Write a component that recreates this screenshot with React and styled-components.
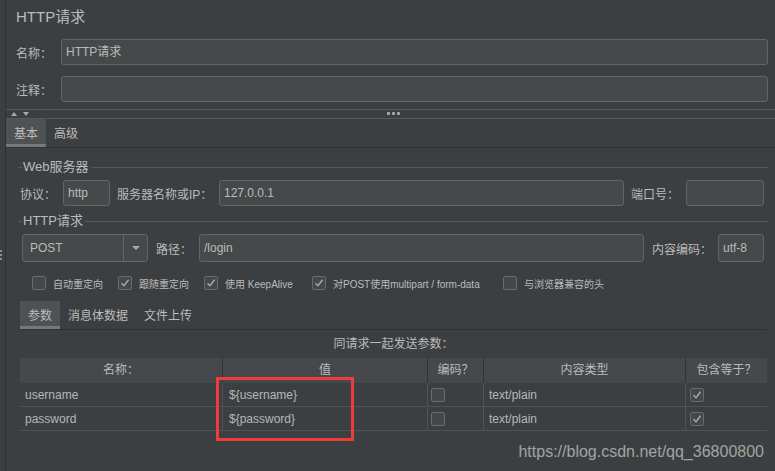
import React from 'react';
import styled, { createGlobalStyle } from 'styled-components';

const Global = createGlobalStyle`
  html, body { margin: 0; padding: 0; background: #3c3f41; }
  body { font-family: "Liberation Sans", "Noto Sans CJK SC", sans-serif; }
  * { box-sizing: border-box; }
`;

const FONT = `"Liberation Sans", "Noto Sans CJK SC", sans-serif`;

const Frame = styled.div`
  position: relative;
  width: 775px;
  height: 471px;
  overflow: hidden;
  display: flex;
  background: #3c3f41;
  color: #bbbbbb;
  font-family: ${FONT};
  font-size: 12px;
`;

const Gutter = styled.div`
  position: relative;
  flex: none;
  width: 6px;
  border-right: 1px solid #2f3133;
`;

const Grip = styled.div`
  position: absolute;
  left: 0;
  top: 250px;
  display: flex;
  flex-direction: column;
  gap: 2px;
  & > span { width: 2px; height: 2px; background: #8d8f91; }
`;

const Main = styled.div`
  flex: 1;
  min-width: 0;
  display: flex;
  flex-direction: column;
`;

const Header = styled.div`
  padding: 0 7px 0 10px;
`;

const Title = styled.div`
  height: 33px;
  line-height: 34px;
  font-size: 15px;
  color: #bbbbbb;
`;

const FieldRow = styled.div`
  display: flex;
  align-items: center;
  margin-top: ${p => p.$mt}px;
`;

const Label = styled.div`
  flex: none;
  width: ${p => p.$w}px;
  padding-left: ${p => p.$pl || 0}px;
  font-size: ${p => p.$fs || 12}px;
  color: #bbbbbb;
  white-space: nowrap;
`;

const Input = styled.div`
  flex: ${p => (p.$w ? 'none' : '1')};
  width: ${p => (p.$w ? `${p.$w}px` : 'auto')};
  height: ${p => p.$h || 26}px;
  line-height: ${p => (p.$h || 26) - 2}px;
  padding: 0 4px;
  border: 1px solid #646464;
  border-radius: 3px;
  background: #45494a;
  color: #bbbbbb;
  font-size: 12px;
  white-space: nowrap;
  overflow: hidden;
`;

const Splitter = styled.div`
  position: relative;
  height: 10px;
  margin-top: 7px;
  border-top: 1px solid #55585a;
  border-bottom: 1px solid #55585a;
  display: flex;
  align-items: center;
  padding-left: 5px;
  gap: 6px;
`;

const Arrow = styled.span`
  width: 0;
  height: 0;
  border-left: 3px solid transparent;
  border-right: 3px solid transparent;
  ${p => (p.$up ? 'border-bottom: 4px solid #a8a8a8;' : 'border-top: 4px solid #a8a8a8;')}
`;

const Dots = styled.div`
  position: absolute;
  left: 381px;
  top: 2px;
  display: flex;
  gap: 2px;
  & > span { width: 3px; height: 3px; background: #a8a8a8; border-radius: 1px; }
`;

const TabStrip = styled.div`
  display: flex;
  height: 29px;
  border-bottom: 1px solid #303234;
  margin: ${p => p.$m || '0'};
`;

const Tab = styled.div`
  height: 28px;
  padding: 0 8px;
  line-height: 30px;
  font-size: 12px;
  color: #bbbbbb;
  background: ${p => (p.$active ? '#4e5254' : 'transparent')};
  border-bottom: 3px solid ${p => (p.$active ? '#75797c' : 'transparent')};
  white-space: nowrap;
`;

const Body = styled.div`
  padding: 0 7px 0 12px;
  display: flex;
  flex-direction: column;
`;

const SectionHead = styled.div`
  display: flex;
  align-items: center;
  height: 14px;
  margin-top: ${p => p.$mt}px;
  &::before { content: ''; width: 4px; border-top: 1px solid #55585a; }
  &::after { content: ''; flex: 1; border-top: 1px solid #55585a; }
`;

const SectionText = styled.span`
  padding: 0 2px 0 1px;
  font-size: 13px;
  color: #bbbbbb;
  line-height: 14px;
`;

const Row = styled.div`
  display: flex;
  align-items: center;
  margin-top: ${p => p.$mt}px;
  padding-left: ${p => p.$pl}px;
  padding-right: ${p => p.$pr || 0}px;
`;

const Combo = styled.div`
  flex: none;
  width: 126px;
  height: 28px;
  display: flex;
  border: 1px solid #646464;
  border-radius: 3px;
  background: #45494a;
`;

const ComboText = styled.div`
  flex: 1;
  padding-left: 7px;
  line-height: 26px;
  font-size: 12px;
  color: #bbbbbb;
  border-right: 1px solid #646464;
`;

const ComboArrow = styled.div`
  width: 23px;
  display: flex;
  align-items: center;
  justify-content: center;
  &::after {
    content: '';
    border-left: 4px solid transparent;
    border-right: 4px solid transparent;
    border-top: 4px solid #a9a9a9;
  }
`;

const CheckRow = styled.div`
  display: flex;
  align-items: center;
  height: 14px;
  margin-top: 14px;
  padding-left: 14px;
`;

const CheckItem = styled.div`
  flex: none;
  width: ${p => (p.$w ? `${p.$w}px` : 'auto')};
  display: flex;
  align-items: center;
  gap: 7px;
  font-size: 10px;
  color: #bbbbbb;
  white-space: nowrap;
`;

const Box = styled.span`
  flex: none;
  width: 14px;
  height: 14px;
  border: 1px solid #6b6b6b;
  border-radius: 2px;
  background: #43494a;
  display: flex;
  align-items: center;
  justify-content: center;
`;

const Check = ({ on }) => (
  <Box>
    {on && (
      <svg width="10" height="10" viewBox="0 0 10 10">
        <path d="M1.5 5.2 L4 7.8 L8.6 1.8" fill="none" stroke="#a9a9a9" strokeWidth="1.4" />
      </svg>
    )}
  </Box>
);

const Caption = styled.div`
  height: 28px;
  line-height: 28px;
  text-align: center;
  font-size: 12px;
  color: #bbbbbb;
  margin: 0 1px 0 2px;
`;

const Table = styled.div`
  margin: 0 1px 0 2px;
  display: grid;
  grid-template-columns: 203px 205px 56px 202px 1fr;
`;

const HeadCell = styled.div`
  height: 25px;
  line-height: 25px;
  text-align: center;
  background: #45494b;
  border-right: ${p => (p.$last ? 'none' : '1px solid #313335')};
  font-size: 12px;
  color: #bbbbbb;
`;

const Cell = styled.div`
  height: 24px;
  display: flex;
  align-items: center;
  padding-left: ${p => p.$pl || 5}px;
  border-bottom: 1px solid #505356;
  border-right: ${p => (p.$last ? 'none' : '1px solid #505356')};
  font-size: 12px;
  color: #b3b8bc;
  white-space: nowrap;
`;

const Highlight = styled.div`
  position: absolute;
  left: 216px;
  top: 377px;
  width: 138px;
  height: 64px;
  border: 3px solid #ee3b3b;
  pointer-events: none;
`;

const Watermark = styled.div`
  position: absolute;
  right: 11px;
  top: 442px;
  font-size: 16px;
  line-height: 20px;
  color: #a3a3a3;
  font-family: "Liberation Sans", sans-serif;
`;

const rows = [
  { name: 'username', value: '${username}' },
  { name: 'password', value: '${password}' },
];

export default function App() {
  return (
    <>
      <Global />
      <Frame>
        <Gutter>
          <Grip><span /><span /><span /></Grip>
        </Gutter>
        <Main>
          <Header>
            <Title>HTTP请求</Title>
            <FieldRow $mt={6}>
              <Label $w={45}>名称：</Label>
              <Input>HTTP请求</Input>
            </FieldRow>
            <FieldRow $mt={11}>
              <Label $w={45}>注释：</Label>
              <Input />
            </FieldRow>
          </Header>
          <Splitter>
            <Arrow $up />
            <Arrow />
            <Dots><span /><span /><span /></Dots>
          </Splitter>
          <TabStrip>
            <Tab $active>基本</Tab>
            <Tab>高级</Tab>
          </TabStrip>
          <Body>
            <SectionHead $mt={12}><SectionText>Web服务器</SectionText></SectionHead>
            <Row $mt={6} $pl={2} $pr={4}>
              <Label $w={43}>协议：</Label>
              <Input $w={47}>http</Input>
              <Label $w={109} $pl={7}>服务器名称或IP：</Label>
              <Input>127.0.0.1</Input>
              <Label $w={62} $pl={7}>端口号：</Label>
              <Input $w={78} />
            </Row>
            <SectionHead $mt={8}><SectionText>HTTP请求</SectionText></SectionHead>
            <Row $mt={6} $pl={4} $pr={4}>
              <Combo>
                <ComboText>POST</ComboText>
                <ComboArrow />
              </Combo>
              <Label $w={51} $pl={8}>路径：</Label>
              <Input $h={28}>/login</Input>
              <Label $w={74} $pl={8}>内容编码：</Label>
              <Input $w={46} $h={28}>utf-8</Input>
            </Row>
            <CheckRow>
              <CheckItem $w={86}><Check />自动重定向</CheckItem>
              <CheckItem $w={86}><Check on />跟随重定向</CheckItem>
              <CheckItem $w={108}><Check on />使用 KeepAlive</CheckItem>
              <CheckItem $w={191}><Check on />对POST使用multipart / form-data</CheckItem>
              <CheckItem><Check />与浏览器兼容的头</CheckItem>
            </CheckRow>
            <TabStrip $m="11px 1px 0 2px">
              <Tab $active>参数</Tab>
              <Tab>消息体数据</Tab>
              <Tab>文件上传</Tab>
            </TabStrip>
            <Caption>同请求一起发送参数：</Caption>
            <Table>
              <HeadCell>名称：</HeadCell>
              <HeadCell>值</HeadCell>
              <HeadCell>编码？</HeadCell>
              <HeadCell>内容类型</HeadCell>
              <HeadCell $last>包含等于？</HeadCell>
              {rows.map(r => (
                <React.Fragment key={r.name}>
                  <Cell>{r.name}</Cell>
                  <Cell $pl={6}>{r.value}</Cell>
                  <Cell $pl={3}><Check /></Cell>
                  <Cell>text/plain</Cell>
                  <Cell $last $pl={4}><Check on /></Cell>
                </React.Fragment>
              ))}
            </Table>
          </Body>
        </Main>
        <Highlight />
        <Watermark>https://blog.csdn.net/qq_36800800</Watermark>
      </Frame>
    </>
  );
}
